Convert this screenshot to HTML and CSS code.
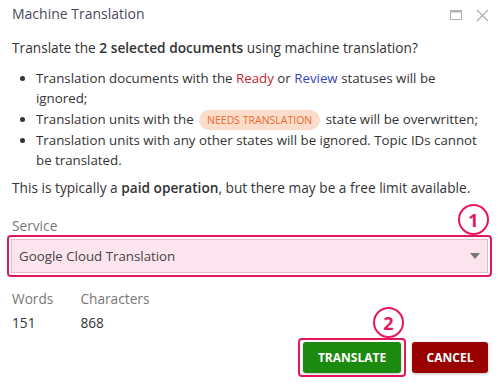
FILE: index.html
```html
<!DOCTYPE html>
<html>
<head>
<meta charset="utf-8">
<link rel="stylesheet" href="styles.css">
</head>
<body>
<div class="dialog">
  <div class="titlebar">
    <div class="title">Machine Translation</div>
    <div class="controls">
      <svg class="ctl" width="12" height="10" viewBox="0 0 12 10"><rect x="0.5" y="0.5" width="11" height="9" fill="none" stroke="#b0b0b0" stroke-width="1"/><rect x="0" y="0" width="12" height="2.5" fill="#b0b0b0"/></svg>
      <svg class="ctl" width="13" height="13" viewBox="0 0 13 13"><path d="M1 1L12 12M12 1L1 12" stroke="#b0b0b0" stroke-width="1.4" fill="none"/></svg>
    </div>
  </div>
  <p class="lead">Translate the <b>2 selected documents</b> using machine translation?</p>
  <ul class="list">
    <li>Translation documents with the <span class="ready">Ready</span> or <span class="review">Review</span> statuses will be ignored;</li>
    <li class="nowrap">Translation units with the <span class="badge">NEEDS TRANSLATION</span> state will be overwritten;</li>
    <li>Translation units with any other states will be ignored. Topic IDs cannot be translated.</li>
  </ul>
  <p class="note">This is typically a <b>paid operation</b>, but there may be a free limit available.</p>
  <div class="field">
    <div class="label">Service</div>
    <div class="hl hl-select">
      <span class="marker m1">1</span>
      <div class="select">
        <span>Google Cloud Translation</span>
        <svg width="10" height="6" viewBox="0 0 10 6"><path d="M0 0H10L5 6Z" fill="#777"/></svg>
      </div>
    </div>
  </div>
  <div class="stats">
    <div class="stat"><div class="stat-label">Words</div><div class="stat-value">151</div></div>
    <div class="stat"><div class="stat-label">Characters</div><div class="stat-value">868</div></div>
  </div>
  <div class="actions">
    <div class="hl hl-btn">
      <span class="marker m2">2</span>
      <button class="btn btn-ok">TRANSLATE</button>
    </div>
    <button class="btn btn-cancel">CANCEL</button>
  </div>
</div>
</body>
</html>
```
FILE: styles.css
```css
* { box-sizing: border-box; }
body {
  margin: 0;
  background: #fff;
  font-family: "Open Sans", "Noto Sans", sans-serif;
  font-size: 13.7px;
  color: #333;
}
.dialog {
  width: 503px;
  height: 384px;
  padding: 0 12px;
}
.titlebar {
  height: 26px;
  display: flex;
  align-items: center;
  justify-content: space-between;
}
.title {
  font-size: 14px;
  color: #4a4a5a;
}
.controls {
  display: flex;
  align-items: center;
  gap: 14px;
  padding-right: 2px;
  padding-top: 4px;
}
.lead {
  margin: 12px 0 0;
  line-height: 20px;
}
b { font-weight: 600; color: #333; }
.list {
  margin: 10px 0 0;
  padding-left: 24px;
  padding-right: 11px;
  line-height: 20.3px;
  font-size: 13.3px;
}
.nowrap { white-space: nowrap; }
.ready { color: #c0262d; }
.review { color: #3344bb; }
.badge {
  display: inline-block;
  background: #fcdccb;
  color: #f06a2a;
  font-size: 10.5px;
  line-height: 20px;
  padding: 0 8px;
  border-radius: 10px;
  margin: 0 2px;
}
.note {
  margin: 8px 0 0;
  line-height: 20px;
}
.field { margin-top: 18px; }
.label { color: #777; line-height: 20px; }
.marker {
  display: flex;
  align-items: center;
  justify-content: center;
  width: 31px;
  height: 31px;
  border: 2.5px solid #e8175d;
  border-radius: 50%;
  color: #e8175d;
  font-weight: 700;
  font-size: 18px;
  background: #fff;
  line-height: 1;
  position: absolute;
  z-index: 1;
}
.hl {
  border: 2px solid #e5175b;
  border-radius: 4px;
  padding: 2px;
  position: relative;
}
.hl-select { margin-left: -5px; width: 485px; margin-top: -1px; }
.m1 { right: 1px; top: -33px; }
.select {
  height: 34px;
  background: #fce4ee;
  border: 1px solid #ebb8c9;
  display: flex;
  align-items: center;
  justify-content: space-between;
  padding: 0 7px 0 7px;
  font-size: 13.3px;
  color: #444;
}
.stats {
  display: flex;
  gap: 27px;
  margin-top: 12px;
}
.stat-label { color: #777; line-height: 20px; }
.stat-value { line-height: 20px; margin-top: 4px; color: #333; }
.actions {
  display: flex;
  justify-content: flex-end;
  align-items: center;
  gap: 6px;
  margin-top: 5px;
  padding-right: 3px;
}
.m2 { right: 0px; top: -33px; }
.hl-btn { padding: 2px 3px 2px 3px; }
.btn {
  border: none;
  border-radius: 3px;
  color: #fff;
  font-family: "Open Sans", sans-serif;
  font-weight: 700;
  font-size: 12px;
  height: 31px;
  padding: 0 14px;
  box-shadow: 0 1px 3px rgba(0,0,0,0.25);
}
.btn-ok { background: #1b8a0e; width: 98px; display: block; }
.btn-cancel { background: #990000; width: 76px; }
```
